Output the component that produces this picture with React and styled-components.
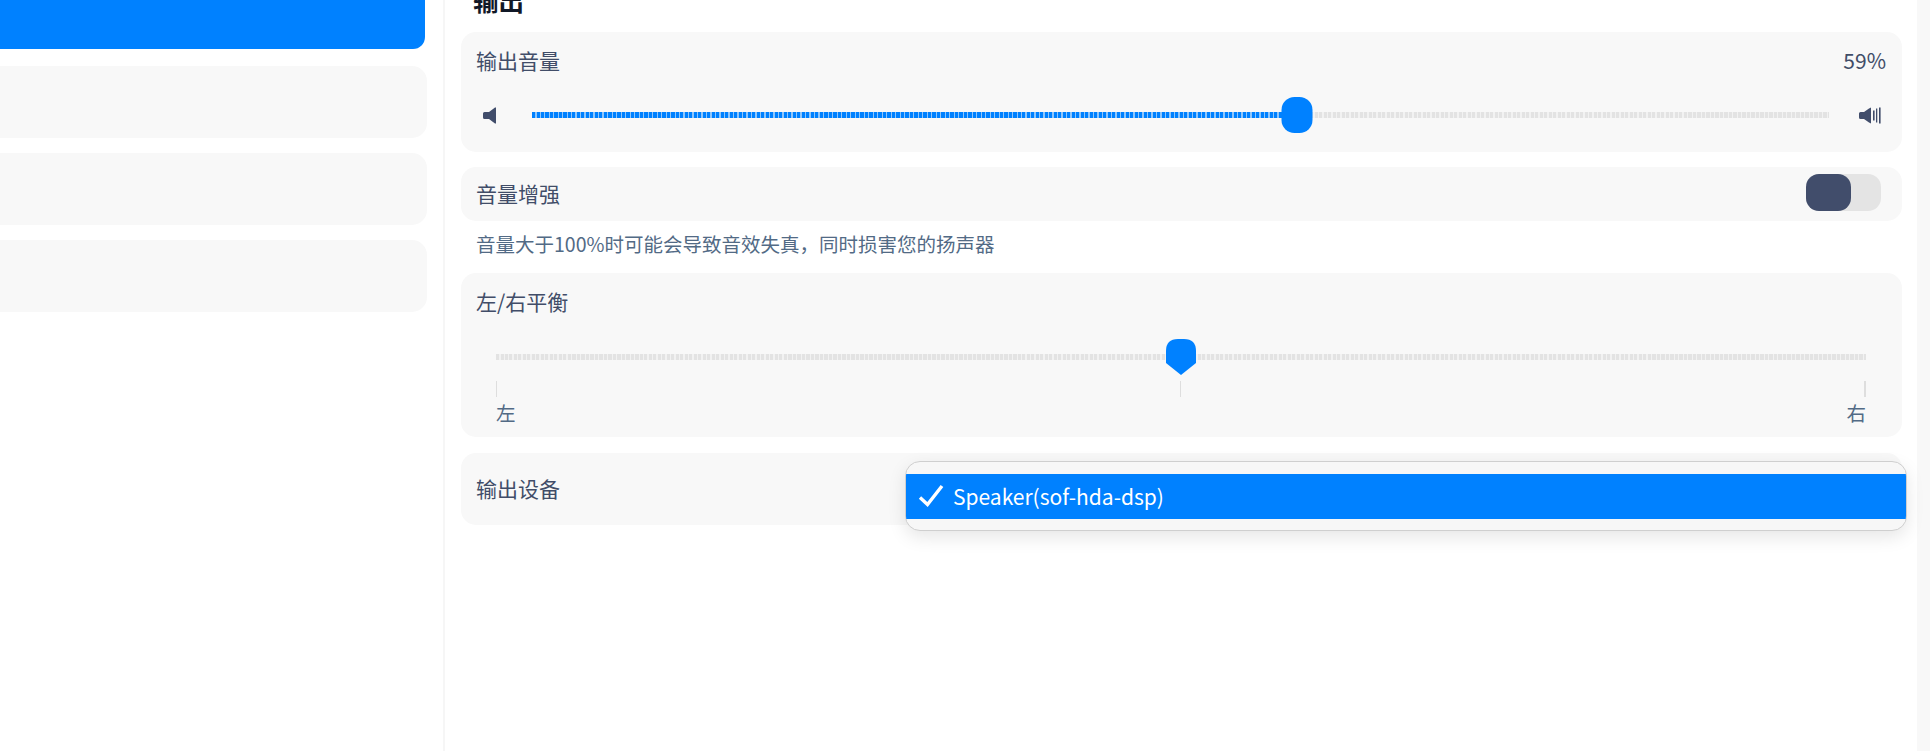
import React from "react";
import styled, { createGlobalStyle } from "styled-components";

const Global = createGlobalStyle`
  html, body { margin: 0; padding: 0; background: #fff; }
  body { font-family: "Noto Sans CJK SC", "Noto Sans", sans-serif; }
`;

const Page = styled.div`
  width: 1930px;
  height: 751px;
  overflow: hidden;
  display: flex;
  background: #fff;
`;

const Sidebar = styled.aside`
  width: 445px;
  flex: none;
  box-sizing: border-box;
  padding-right: 16px;
  display: flex;
  flex-direction: column;
  gap: 15px;
  border-right: 2px solid #f6f6f6;
`;

const NavItem = styled.div`
  height: ${(p) => (p.$active ? "49px" : "72px")};
  margin-left: -30px;
  margin-right: ${(p) => (p.$active ? "2px" : "0")};
  margin-bottom: ${(p) => (p.$active ? "2px" : "0")};
  border-radius: ${(p) => (p.$active ? "0 0 12px 12px" : "15px")};
  background: ${(p) => (p.$active ? "#0081ff" : "#f8f8f8")};
`;

const Main = styled.main`
  flex: 1;
  min-width: 0;
  box-sizing: border-box;
  padding: 0 15px 0 16px;
  display: flex;
  flex-direction: column;
`;

const Title = styled.h2`
  margin: -19px 0 0;
  padding-left: 12px;
  height: 51px;
  font-size: 25.5px;
  line-height: 38px;
  font-weight: 700;
  color: #111827;
`;

const Panel = styled.section`
  background: #f8f8f8;
  border-radius: 15px;
  box-sizing: border-box;
  padding: ${(p) => p.$padding || "0 16px 0 15px"};
  height: ${(p) => p.$height};
  margin-bottom: ${(p) => p.$after || "0"};
`;

const Row = styled.div`
  display: flex;
  align-items: center;
  justify-content: space-between;
  height: ${(p) => p.$height || "30px"};
`;

const Label = styled.span`
  font-size: 21px;
  line-height: 30px;
  margin-bottom: 2px;
  color: #414d68;
`;

const SliderRow = styled.div`
  margin-top: 21px;
  padding: 0 5px 0 7px;
  display: flex;
  align-items: center;
  height: 36px;
`;

const Track = styled.div`
  position: relative;
  flex: 1;
  height: 36px;
  display: flex;
  align-items: center;
`;

const Dashes = styled.div`
  width: 100%;
  height: 6px;
  background: repeating-linear-gradient(
    90deg,
    #e3e3e3 0,
    #e3e3e3 3px,
    #f2f2f2 3px,
    #f2f2f2 4.5px
  );
`;

const Fill = styled.div`
  position: absolute;
  left: 0;
  top: 15px;
  height: 6px;
  background: repeating-linear-gradient(
    90deg,
    #0081ff 0,
    #0081ff 3px,
    #8fc6fb 3px,
    #8fc6fb 4.5px
  );
`;

const RoundThumb = styled.div`
  position: absolute;
  top: 0;
  width: 31px;
  height: 36px;
  transform: translateX(-50%);
  border-radius: 13px;
  background: #0081ff;
`;

const PointerThumb = styled.div`
  position: absolute;
  top: 0;
  width: 30px;
  height: 36px;
  transform: translateX(-50%);
  background: #0081ff;
  clip-path: path("M12 0 H18 Q30 0 30 12 V24 L15 36 L0 24 V12 Q0 0 12 0 Z");
`;

const Gap = styled.div`
  flex: none;
  width: ${(p) => p.$width};
`;

const Toggle = styled.div`
  width: 75px;
  height: 37px;
  margin: -3px 5px 0 0;
  border-radius: 13px;
  background: #e4e4e4;
`;

const Knob = styled.div`
  width: 45px;
  height: 37px;
  border-radius: 13px;
  background: #414d6b;
`;

const Hint = styled.p`
  margin: 0;
  height: 52px;
  padding-left: 15px;
  font-size: 19.5px;
  line-height: 46px;
  color: #526a85;
`;

const Balance = styled.div`
  margin: 22px 20px 0 20px;
`;

const BalanceTrack = styled.div`
  position: relative;
  height: 36px;
  display: flex;
  align-items: center;
`;

const Ticks = styled.div`
  margin-top: 6px;
  height: 16px;
  display: flex;
  justify-content: space-between;
`;

const Tick = styled.i`
  display: block;
  width: ${(p) => p.$width || "1px"};
  height: 16px;
  background: #dedede;
`;

const Ends = styled.div`
  margin-top: 4px;
  display: flex;
  justify-content: space-between;
  font-size: 19.5px;
  line-height: 24px;
  color: #526a85;
`;

const DeviceRow = styled.div`
  position: relative;
  height: 72px;
  padding: 0 15px;
  box-sizing: border-box;
  display: flex;
  align-items: center;
  background: #f8f8f8;
  border-radius: 15px;
`;

const Popup = styled.div`
  position: absolute;
  top: 8px;
  right: -5px;
  width: 1002px;
  height: 70px;
  box-sizing: border-box;
  padding-top: 12px;
  background: #f7f7f7;
  border: 1px solid #cfcfcf;
  border-radius: 15px;
  box-shadow: 0 6px 18px rgba(0, 0, 0, 0.1);
  overflow: hidden;
`;

const Option = styled.div`
  height: 45px;
  box-sizing: border-box;
  padding: 0 0 2px 12px;
  display: flex;
  align-items: center;
  gap: 9px;
  background: #0081ff;
  color: #fff;
  font-size: 21px;
`;

const Scrollbar = styled.div`
  width: 13px;
  flex: none;
  background: #f8f8f8;
`;

const SpeakerLow = () => (
  <svg width="13" height="17" viewBox="0 0 13 17" style={{ flex: "none" }}>
    <path d="M0 6.5Q0 5 1.5 5H6L10 2 12 .5H13V16.5H12L6 12H1.5Q0 12 0 10.5Z" fill="#414d6b" />
  </svg>
);

const SpeakerHigh = () => (
  <svg width="22" height="17" viewBox="0 0 22 17" style={{ flex: "none" }}>
    <path d="M0 6.5Q0 5 1.5 5H5L10 1.5 12 .5V16.5L10 15.5 5 12H1.5Q0 12 0 10.5Z" fill="#414d6b" />
    <rect x="14" y="3.5" width="1.6" height="10" fill="#414d6b" />
    <rect x="17" y="1.5" width="1.3" height="14" fill="#414d6b" />
    <rect x="20" y=".5" width="1.6" height="16" fill="#414d6b" />
  </svg>
);

const CheckMark = () => (
  <svg width="26" height="23" viewBox="0 0 26 23" style={{ flex: "none" }}>
    <path d="M2 13.5 9.5 20.5 24 2" fill="none" stroke="#fff" strokeWidth="3.4" />
  </svg>
);

export default function App() {
  const volume = 59;
  return (
    <Page>
      <Global />
      <Sidebar>
        <NavItem $active />
        <NavItem />
        <NavItem />
        <NavItem />
      </Sidebar>
      <Main>
        <Title>输出</Title>
        <Panel $height="120px" $padding="14px 16px 0 15px" $after="15px">
          <Row>
            <Label>输出音量</Label>
            <Label>59%</Label>
          </Row>
          <SliderRow>
            <SpeakerLow />
            <Gap $width="36px" />
            <Track>
              <Dashes />
              <Fill style={{ width: `${volume}%` }} />
              <RoundThumb style={{ left: `${volume}%` }} />
            </Track>
            <Gap $width="30px" />
            <SpeakerHigh />
          </SliderRow>
        </Panel>
        <Panel $height="54px">
          <Row $height="54px">
            <Label>音量增强</Label>
            <Toggle>
              <Knob />
            </Toggle>
          </Row>
        </Panel>
        <Hint>音量大于100%时可能会导致音效失真，同时损害您的扬声器</Hint>
        <Panel $height="164px" $padding="14px 16px 0 15px" $after="16px">
          <Row>
            <Label>左/右平衡</Label>
          </Row>
          <Balance>
            <BalanceTrack>
              <Dashes />
              <PointerThumb style={{ left: "50%" }} />
            </BalanceTrack>
            <Ticks>
              <Tick />
              <Tick />
              <Tick $width="2px" />
            </Ticks>
            <Ends>
              <span>左</span>
              <span>右</span>
            </Ends>
          </Balance>
        </Panel>
        <DeviceRow>
          <Label>输出设备</Label>
          <Popup>
            <Option>
              <CheckMark />
              Speaker(sof-hda-dsp)
            </Option>
          </Popup>
        </DeviceRow>
      </Main>
      <Scrollbar />
    </Page>
  );
}
